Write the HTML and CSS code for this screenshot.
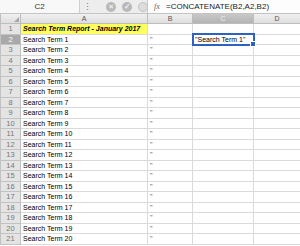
FILE: index.html
```html
<!DOCTYPE html>
<html lang="en">
<head>
    <meta charset="UTF-8">
    <title>Search Term Report</title>
    <link rel="stylesheet" href="styles.css">
</head>
<body>
    <!-- Formula bar -->
    <div class="formula-bar">
        <div class="name-box">C2</div>
        <div class="grip">&#8942;</div>
        <div class="fbtns">
            <span class="fbtn">&#215;</span>
            <span class="fbtn">&#10003;</span>
            <span class="fbtn half"></span>
        </div>
        <div class="formula">
            <span class="fx">fx</span>
            <span class="ftext">=CONCATENATE(B2,A2,B2)</span>
        </div>
    </div>

    <!-- Sheet -->
    <table class="sheet">
        <colgroup>
            <col class="c-row">
            <col class="c-a">
            <col class="c-b">
            <col class="c-c">
            <col class="c-d">
        </colgroup>
        <thead>
            <tr>
                <th class="corner"><span class="tri"></span></th>
                <th>A</th>
                <th>B</th>
                <th class="hsel">C</th>
                <th>D</th>
            </tr>
        </thead>
        <tbody id="rows">
            <tr>
                <th class="rnum">1</th>
                <td class="title">Search Term Report - January 2017</td>
                <td></td>
                <td></td>
                <td></td>
            </tr>
        </tbody>
    </table>

    <script>
        // Build rows 2-21
        const body = document.getElementById('rows');
        for (let i = 1; i <= 20; i++) {
            const tr = document.createElement('tr');
            const rowNum = i + 1;
            const sel = rowNum === 2;
            tr.innerHTML = `
                <th class="rnum${sel ? ' rsel' : ''}">${rowNum}</th>
                <td>Search Term ${i}</td>
                <td class="q">"</td>
                <td class="${sel ? 'csel' : ''}">${sel ? '"Search Term 1"<span class="handle"></span>' : ''}</td>
                <td></td>
            `;
            body.appendChild(tr);
        }
    </script>
</body>
</html>
```

FILE: styles.css
```css
body {
    margin: 0;
    padding: 0;
    width: 300px;
    height: 246px;
    overflow: hidden;
    background: #fff;
    font-family: "Liberation Sans", Arial, sans-serif;
}

.formula-bar {
    display: flex;
    align-items: center;
    height: 14px;
    background: #ededed;
    border-bottom: 1px solid #c4c4c4;
    box-sizing: border-box;
}

.name-box {
    width: 80px;
    height: 13px;
    line-height: 13px;
    text-align: center;
    font-size: 8px;
    color: #333;
    background: #f8f8f8;
    border-right: 1px solid #cfcfcf;
    box-sizing: border-box;
}

.grip {
    width: 12px;
    text-align: center;
    font-size: 9px;
    color: #777;
    margin-left: 1px;
}

.fbtns {
    display: flex;
    gap: 6px;
    margin-left: 13px;
    width: 41px;
    overflow: hidden;
}

.fbtn {
    width: 10px;
    height: 10px;
    border-radius: 50%;
    background: #b9b9b9;
    color: #f4f4f4;
    font-size: 8px;
    line-height: 10px;
    text-align: center;
    font-weight: bold;
    flex: none;
}

.fbtn.half {
    background: #dcdcdc;
    border: 1px solid #c0c0c0;
    box-sizing: border-box;
}

.formula {
    flex: 1;
    height: 13px;
    display: flex;
    align-items: center;
    background: #fdfdfd;
    border-left: 1px solid #c8c8c8;
}

.fx {
    font-family: "Liberation Serif", serif;
    font-style: italic;
    font-size: 8px;
    color: #666;
    margin-left: 6px;
    width: 12px;
}

.ftext {
    font-size: 8px;
    color: #222;
}

.sheet {
    border-collapse: collapse;
    table-layout: fixed;
    width: 300px;
}

.c-row { width: 20px; }
.c-a { width: 127px; }
.c-b { width: 45px; }
.c-c { width: 61px; }
.c-d { width: 47px; }

.sheet thead th {
    height: 9px;
    padding: 0;
    font-size: 7px;
    font-weight: normal;
    color: #555;
    background: linear-gradient(#f0f0f0, #dedede);
    border: 1px solid #bdbdbd;
    border-top: none;
    line-height: 9px;
}

.sheet thead th.hsel {
    background: linear-gradient(#c8c8c8, #b4b4b4);
    color: #eee;
}

.corner {
    position: relative;
}

.tri {
    position: absolute;
    right: 1px;
    bottom: 1px;
    width: 0;
    height: 0;
    border-left: 5px solid transparent;
    border-bottom: 5px solid #a8a8a8;
}

.sheet td, .sheet th.rnum {
    height: 9.5px;
    padding: 0 0 0 2px;
    font-size: 7px;
    line-height: 9px;
    border: 1px solid #dadada;
    white-space: nowrap;
    overflow: visible;
    color: #000;
}

.sheet th.rnum {
    padding: 0;
    font-weight: normal;
    color: #777;
    font-size: 7.5px;
    background: #e4e4e4;
    border-color: #c2c2c2;
    text-align: center;
}

.sheet th.rsel {
    background: #a9a9a9;
    color: #fff;
}

.sheet td.title {
    background: #ffff5e;
    font-weight: bold;
    font-style: italic;
}

.sheet td.q {
    color: #555;
    font-size: 7px;
}

.sheet td.csel {
    position: relative;
    outline: 2px solid #2f62c0;
    outline-offset: -1px;
}

.handle {
    position: absolute;
    right: -3px;
    bottom: -3px;
    width: 4px;
    height: 4px;
    background: #2f62c0;
    border: 1px solid #fff;
}
```
